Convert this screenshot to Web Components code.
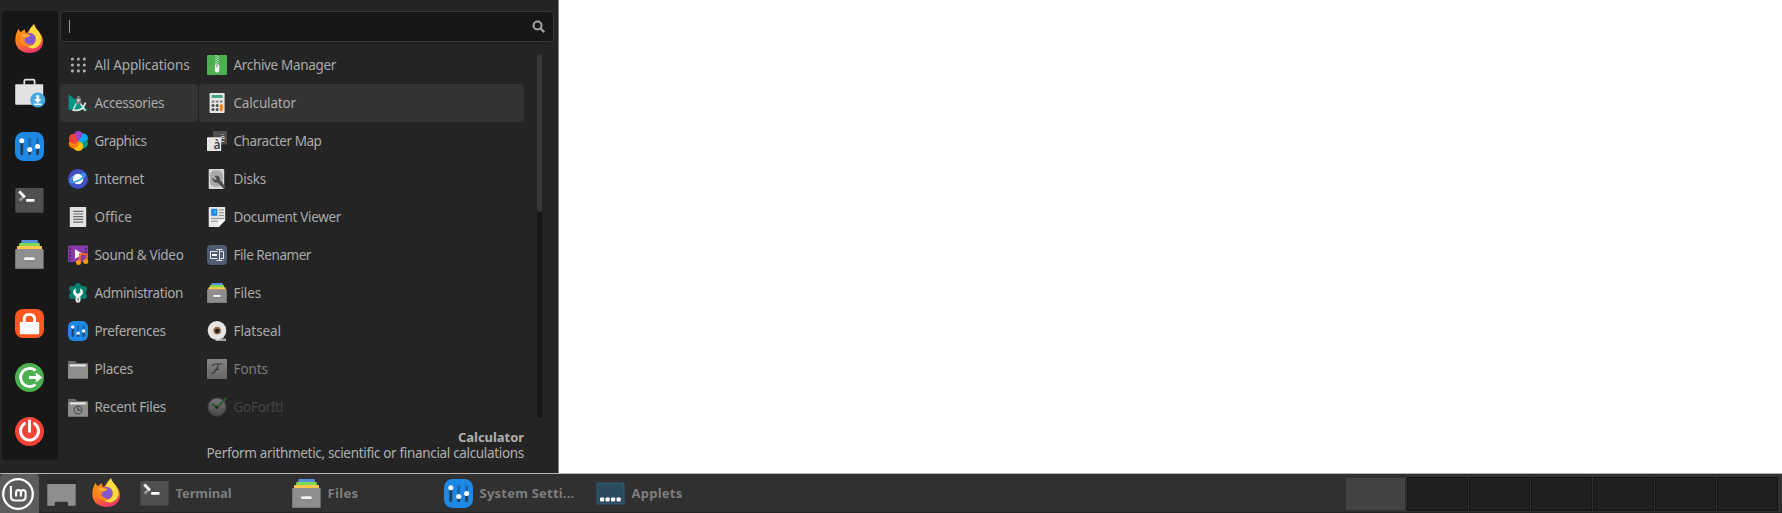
<!DOCTYPE html>
<html lang="en">
<head>
<meta charset="utf-8">
<title>Desktop</title>
<style>
html,body{margin:0;padding:0;background:#fff;overflow:hidden}
body{font-family:"Noto Sans","Open Sans",sans-serif;color:#aaa}
</style>
</head>
<body>
<desk-top></desk-top>
<script>
const settings = `<rect width="29" height="29" rx="8.5" fill="#1e88e5"/>
<path d="M6.8 8.5V21.8M14.7 18V21.8M22.6 15V21.8" stroke="#263f5a" stroke-width="2.9" stroke-linecap="round"/>
<path d="M14.7 7.5V15M22.6 7.5V12" stroke="#1766b0" stroke-width="2.9" stroke-linecap="round"/>
<circle cx="6.8" cy="8.7" r="2.5" fill="#fff"/><circle cx="14.7" cy="17.6" r="2.5" fill="#fff"/><circle cx="22.6" cy="14.6" r="2.5" fill="#fff"/>`;
const files = `<rect x="6.3" y="0" width="16.6" height="6" rx=".8" fill="#5290d9"/><rect x="4.2" y="3" width="20.6" height="6" rx=".8" fill="#7ed957"/><rect x="2" y="6" width="25" height="6" rx=".8" fill="#ffc84a"/><rect x=".2" y="9" width="28.4" height="20" rx="1" fill="#8e8e8e"/><path d="M.4 28.4H28.4" stroke="#757575" stroke-width="1"/><rect x="9.2" y="17.3" width="10.4" height="3" rx=".8" fill="#f4f4f4"/><path d="M9.5 20.9H19.3" stroke="#727272" stroke-width=".8"/>`;
const folder = `<path d="M0 3Q0 2 1 2H7L9 4H20V9H0Z" fill="#6c6c6c"/><rect x="0" y="5.2" width="20" height="14.5" rx=".6" fill="#8e8e8e"/><rect x="2" y="5.4" width="16" height="2" fill="#ececec"/>`;
const ICONS = {
firefox:[29,`<defs><linearGradient id="a" x1=".3" y1="0" x2=".6" y2="1"><stop offset="0" stop-color="#ff9800"/><stop offset=".55" stop-color="#ff7a20"/><stop offset="1" stop-color="#e8336e"/></linearGradient></defs>
<path d="M3.8 4.8Q4 7.3 6 8Q8 6 10 5.2Q9.7 8 11.5 9.5L18 1.2Q18.4 .2 19 .2Q20 4 24 8Q28.5 13 28 18Q26.500 29 14.300 29Q2 28.500 .3 17.300Q.2 9 3.800 4.800Z" fill="url(#a)"/>
<path d="M19 .2Q13.500 5 14.200 10Q22 12 20.500 17.500Q18.500 22 12 22.600Q19 27 24.800 20.500Q27.500 16 25.300 10.500Q24 7.500 21.600 5Q19.500 2.500 19 .2Z" fill="#ffdc3d"/>
<circle cx="14.400" cy="15" r="6.200" fill="#8458cf"/>
<path d="M3.800 9.500Q8 8 12.200 9.400L15.600 11Q14.500 13.500 11 13.400Q9 15 9.600 17.300Q11 20.500 15.800 20.400Q13 23.200 9 21.800Q3.500 18.800 3.800 9.500Z" fill="#ff8a1d"/><path d="M6 11Q10 9.500 14.800 11.300Q13 13.100 9.600 12.900Z" fill="#ffb343"/>`],
bag:[29,`<g transform="translate(0 .7)"><path d="M9.300 6V2.300Q9.300 1 10.600 1H18.300Q19.600 1 19.600 2.300V6" fill="none" stroke="#e2e2e2" stroke-width="1.700"/><rect x=".2" y="5.500" width="28" height="20.600" rx=".8" fill="#e2e2e2"/><circle cx="22.800" cy="21.300" r="7.600" fill="#43a9e0"/><path d="M21.300 16.600H24.200V20.500H26.700L22.750 24.200L18.800 20.500H21.300ZM18.900 24.700H26.600V26.200H18.900Z" fill="#fff"/></g>`],
settings:[29,settings], pref:[29,settings], files:[29,files],
terminal:[29,`<rect x=".3" y="2" width="28.300" height="25" rx="1.300" fill="#505050"/><path d="M.8 26.400H28" stroke="#3d3d3d"/><path d="M8.800 10.300L4.600 14.600" stroke="#9a9a9a" stroke-width="2.600"/><path d="M4.200 5.500L10 11.300" stroke="#fff" stroke-width="2.700"/><rect x="11.200" y="13" width="8.300" height="2.800" rx=".5" fill="#fff"/>`],
lock:[29,`<rect width="29" height="29" rx="8" fill="#ff5722"/><path d="M9.200 15V10.300Q9.200 5.400 14.400 5.400Q19.600 5.400 19.600 10.300V15" fill="none" stroke="#fff" stroke-width="2.900"/><rect x="4.800" y="13" width="19.400" height="12.200" rx="1.200" fill="#fff"/>`],
logout:[29,`<circle cx="14.500" cy="14.500" r="14.500" fill="#4caf50"/><path d="M20.500 7.500A9.100 9.100 0 1 0 20.500 21.500" fill="none" stroke="#fff" stroke-width="2.900"/><path d="M14 13.100H20.800V9.500L27.500 14.500L20.800 19.500V15.900H14Z" fill="#fff"/>`],
power:[29,`<circle cx="14.500" cy="14.500" r="14.500" fill="#f44336"/><path d="M9.500 6.600A9 9 0 1 0 19.500 6.600" fill="none" stroke="#fff" stroke-width="2.900" stroke-linecap="round"/><path d="M14.500 4V14.500" stroke="#fff" stroke-width="2.900" stroke-linecap="round"/>`],
all:[20,`<g fill="#aeaeae">${[4.6,10.600,16.500].map(y=>[4.600,10.600,16.500].map(x=>`<circle cx="${x-.2}" cy="${y-.6}" r="1.550"/>`).join('')).join('')}</g>`],
accessories:[20,`<path d="M.6 1.300L20 17H.6Z" fill="#009688"/><path d="M9.200 3h2.400v2.200h1.600v4.500l-1.500 1.600H9L7.600 9.700V5.200h1.600z" fill="#7d7d7d"/><circle cx="10.400" cy="7.400" r="1.300" fill="#ddd"/><path d="M8.200 10.500L4.800 17.800M12.500 10.500L17.500 18" stroke="#ddd" stroke-width="1.500"/><path d="M4.700 16.800Q14.500 19.500 17.500 9.600" fill="none" stroke="#e5e5e5" stroke-width="1.800"/>`],
graphics:[20,`<circle cx="10.300" cy="4.900" r="4.900" fill="#9c3fc4"/><circle cx="15" cy="7.500" r="4.900" fill="#039be5"/><circle cx="15" cy="12.600" r="4.900" fill="#009a85"/><circle cx="10.300" cy="15.200" r="4.900" fill="#ffc107"/><circle cx="5.700" cy="12.600" r="4.900" fill="#ff8500"/><path d="M10.300 10A4.900 4.900 0 1 1 8.600 3.800Q9 7.500 10.300 10Z" fill="#f4433c"/><path d="M10.300 10L13.800 3.200Q18.500 1.700 19.600 6.500L15 12Z" fill="#03a9f4"/><path d="M10.300 10L5.700 9V5L10 1L14.500 4Z" fill="#a440c8"/><path d="M10.300 10L6 12L2 9.500Q.5 6 3 3.500Q8 2 8 6Z" fill="#f4433c"/>`],
internet:[20,`<circle cx="10" cy="10" r="10" fill="#3f51c5"/><circle cx="10" cy="10" r="5.300" fill="#fff"/><path d="M5 7.500Q-1 14.500 5.500 13.200Q13 11.400 16.500 6.700Q18 3.500 12.500 5.700" fill="none" stroke="#38a3ed" stroke-width="1.700"/>`],
office:[20,`<rect x="1.800" width="16.400" height="20" rx=".6" fill="#e2e2e2"/><path d="M5.200 4.400H15.200M5.200 7H15.200M5.200 9.700H15.200M5.200 12.400H15.200M5.200 15.100H15.200" stroke="#686868" stroke-width="1.200"/>`],
media:[20,`<rect y=".5" width="20" height="16.500" rx=".5" fill="#853ca4"/><path d="M2.100 3V15.500M17.900 3V10" stroke="#4f226f" stroke-width="1.800" stroke-dasharray="2 1.500"/><path d="M7 4.200L15.200 9L7 13.800Z" fill="#fff"/><path d="M11.800 17V9.200H19V16" fill="none" stroke="#ff6417" stroke-width="1.800"/><circle cx="10.500" cy="17.400" r="2.500" fill="#ff9800"/><circle cx="17.700" cy="16.400" r="2.500" fill="#ff9800"/>`],
admin:[20,`<g fill="#07806f"><circle cx="10" cy="9.400" r="7.600"/><circle cx="10" cy="3" r="2.900"/><circle cx="10" cy="15.800" r="2.900"/><circle cx="4" cy="6" r="2.900"/><circle cx="16" cy="6" r="2.900"/><circle cx="4" cy="13" r="2.900"/><circle cx="16" cy="13" r="2.900"/></g><path d="M7.700 5.200V9.200L10 11L12.300 9.200V5.200Q15 6.600 15 9.500Q14.600 12 12.300 13V14H7.700V13Q5.400 12 5 9.500Q5 6.600 7.700 5.200Z" fill="#fff"/><path d="M7.600 13.500H12.400V18Q12.400 19.800 10 19.800Q7.600 19.800 7.600 18Z" fill="#ddd"/><path d="M10 15V17.500" stroke="#888" stroke-width="1.200"/>`],
places:[20,folder],
recent:[20,folder+`<circle cx="10" cy="13" r="3.900" fill="none" stroke="#4f4f4f" stroke-width="1.100"/><path d="M10 10.200V13.100H12.500" fill="none" stroke="#444" stroke-width="1.200"/>`],
archive:[20,`<rect width="20" height="20" rx="1" fill="#4caf50"/><path d="M9 0V9M11 1V9" stroke="#e0eee0" stroke-width="1.300" stroke-dasharray="1 1"/><rect x="7.800" y="9" width="4.500" height="8.400" rx="2" fill="#f5f5f5"/><rect x="9.200" y="9" width="1.600" height="3.500" fill="#aaa"/>`],
calc:[20,`<rect x="2.600" width="15" height="20" rx=".8" fill="#e7e7e7"/><rect x="4.600" y="2" width="11" height="3" fill="#42a87d"/><g fill="#898989"><circle cx="6" cy="8.600" r="1.450"/><circle cx="10.100" cy="8.600" r="1.450"/><circle cx="14.200" cy="8.600" r="1.450"/></g><g fill="#4b4b4b"><circle cx="6" cy="12.600" r="1.500"/><circle cx="10.100" cy="12.600" r="1.500"/><circle cx="6" cy="16.600" r="1.500"/><circle cx="10.100" cy="16.600" r="1.500"/></g><rect x="12.800" y="11.300" width="3" height="6.800" rx=".6" fill="#ff7f0e"/>`],
charmap:[20,`<rect x="6" y="0" width="14" height="13.500" rx=".6" fill="#4d4d4d"/><text x="12.500" y="11" font-family="Noto Sans" font-size="10" fill="#ccc">ë</text><rect y="6.200" width="14.200" height="13.800" rx=".5" fill="#e5e5e5"/><text x="6.400" y="18" font-family="Noto Sans" font-size="12" font-weight="600" fill="#444">à</text>`],
disks:[20,`<rect x="1.700" width="15.500" height="20" rx=".8" fill="#d8d8d8"/><rect x="3" y="1.200" width="13" height="16.500" rx="5" fill="#aaa"/><path d="M8.200 7.200Q12.600 6.400 12.500 10.500L18.500 18.500L17 19.600L10.500 13.200Q6.400 14 5.500 9.300L8.200 11.500L10 10Z" fill="#4d4d4d" stroke="#4d4d4d" stroke-width=".8"/>`],
doc:[20,`<path d="M1.700 .7Q1.700 0 2.400 0H17.500Q18.200 0 18.200 .7V13.300L11.700 20H2.400Q1.700 20 1.700 19.300Z" fill="#e7e7e7"/><path d="M11.700 20V13.300H18.200Z" fill="#fff"/><rect x="4.200" y="1.800" width="6" height="7" fill="#1f7fe8"/><path d="M6.600 3H9V6.500H6.600Z" fill="#29b6f6"/><path d="M11.700 3H17M11.700 5.700H17M11.700 8.400H17M4 11.400H17M4 14.200H11" stroke="#8a8a8a" stroke-width="1"/>`],
rename:[20,`<rect width="20" height="20" rx="4" fill="#4d5c70"/><path d="M10.500 6.500H3.500V13.500H10.500M13.500 6.500H16.500V13.500H13.500M12.500 4.500V15.500M9.500 4.500H15.500M9.500 15.500H15.500" fill="none" stroke="#e6e8eb" stroke-width="1"/><rect x="5" y="9" width="5" height="2" fill="#fff"/>`],
flatseal:[20,`<path d="M10 17.500H19V20H8Z" fill="#a4a4a4"/><ellipse cx="10" cy="9.500" rx="9.300" ry="9.500" fill="#e6e5e3"/><circle cx="10.200" cy="9.600" r="3.900" fill="#a5764e"/><circle cx="10.300" cy="9.800" r="2.400" fill="#222"/>`],
fonts:[20,`<defs><linearGradient id="b" x1="0" y1="0" x2="0" y2="1"><stop offset="0" stop-color="#868686"/><stop offset="1" stop-color="#656565"/></linearGradient></defs><rect width="20" height="20" rx=".6" fill="url(#b)"/><path d="M5.500 7.500Q5 5 8 5H15.500M11.500 5Q9.500 13 4.500 15M7.500 10.400H12.500" fill="none" stroke="#3c3c3c" stroke-width="1.200"/>`],
goforit:[20,`<defs><linearGradient id="c" x1="0" y1="0" x2="0" y2="1"><stop offset="0" stop-color="#767676"/><stop offset="1" stop-color="#474747"/></linearGradient></defs><circle cx="10" cy="10" r="9" fill="url(#c)" stroke="#3f3f3f" stroke-width="1.300"/><path d="M4.500 6.800L10 10.600L19.200 1" fill="none" stroke="#24612a" stroke-width="2"/><circle cx="9.800" cy="10.200" r="1.600" fill="#292929"/>`],
mint:[32,`<circle cx="16" cy="16" r="14.800" fill="none" stroke="#fff" stroke-width="2.300"/><path d="M8.900 8V18.500Q8.900 22.500 13 22.500H19.500Q23.600 22.500 23.600 18.700V14.700Q23.600 12.200 21.200 12.200Q18.900 12.200 18.900 14.700V18.500M18.900 14.700Q18.900 12.200 16.500 12.200Q14.100 12.200 14.100 14.700V18.500" fill="none" stroke="#f5f5f5" stroke-width="2.200"/>`],
desktop:[29,`<rect x=".3" y="1.700" width="28.400" height="4" fill="#262626"/><path d="M.3 6H28.700V27.800H21V25.200Q21 23.800 19.600 23.800H9.200Q7.800 23.800 7.800 25.200V27.800H.3Z" fill="#8e8e8e"/>`],
applets:[29,`<rect x=".5" y="3.500" width="28" height="22" rx="1" fill="#2d5d78"/><rect x="1.700" y="4.700" width="25.600" height="19.600" fill="#294b5d"/><g fill="#fff"><rect x="4" y="18.400" width="4.200" height="4.200" rx="1"/><rect x="9.500" y="18.400" width="4.200" height="4.200" rx="1"/><rect x="15" y="18.400" width="4.200" height="4.200" rx="1"/><rect x="20.500" y="18.400" width="4.200" height="4.200" rx="1"/></g>`],
search:[14,`<circle cx="5.500" cy="5.500" r="4" fill="none" stroke="#a6a6a6" stroke-width="2"/><path d="M8.300 8.300L12.300 12.200" stroke="#a6a6a6" stroke-width="2.200"/>`]
};
function define(name, html, ready){
  customElements.define(name, class extends HTMLElement{
    connectedCallback(){
      if(this.shadowRoot) return;
      const r=this.attachShadow({mode:'open'});
      r.innerHTML=typeof html==='function'?html(this):html;
      if(ready) ready(this,r);
    }
  });
}
define('app-icon', el=>{
  const [v,body]=ICONS[el.getAttribute('name')], s=el.getAttribute('size')||v;
  return `<style>:host{display:block;flex:none;width:${s}px;height:${s}px}svg{display:block;overflow:visible}</style><svg width="${s}" height="${s}" viewBox="0 0 ${v} ${v}">${body}</svg>`;
});
/* a label whose tracking is tuned so that it fills the given advance width */
define('fit-label', `<style>:host{display:block;white-space:pre;flex:none}span{display:inline-block}</style><span><slot></slot></span>`,
 (el,r)=>{
  const s=r.querySelector('span'), n=el.textContent.length;
  s.style.letterSpacing=((+el.getAttribute('w')-s.getBoundingClientRect().width)/n)+'px';
});
define('menu-row', el=>`<style>
:host{display:flex;align-items:center;box-sizing:border-box;height:38px;padding-left:8px;gap:6.500px;border-radius:4px;font-size:13.500px;line-height:20px;color:#aaa}
:host([active]){background:#333}
</style><app-icon name="${el.getAttribute('icon')}" size="20"></app-icon><fit-label w="${el.getAttribute('w')}">${el.getAttribute('label').replace('&','&amp;')}</fit-label>`);
define('search-box', `<style>
:host{display:flex;align-items:center;justify-content:space-between;box-sizing:border-box;width:494px;height:31px;padding:0 7px 0 8px;border:1px solid #373737;border-radius:4px;background:#171717}
i{width:1px;height:13px;background:#999;margin-top:-1px}
</style><i></i><app-icon name="search"></app-icon>`);
define('side-bar', `<style>
:host{display:flex;flex-direction:column;align-items:flex-start;gap:25px;box-sizing:border-box;width:56px;height:448.500px;margin:11px 0 0 2px;padding:13px 0 0 13.400px;border-radius:4px;background:#171717}
.gap{margin-top:15px}
</style><app-icon name="firefox"></app-icon><app-icon name="bag"></app-icon><app-icon name="settings"></app-icon><app-icon name="terminal"></app-icon><app-icon name="files"></app-icon><app-icon class="gap" name="lock"></app-icon><app-icon name="logout"></app-icon><app-icon name="power"></app-icon>`);
define('scroll-bar', `<style>:host{display:block;width:5px;height:364px;border-radius:3px;background:#171717}div{height:158px;border-radius:3px;background:#373737}</style><div></div>`);
const rows=(list,act)=>list.map(([i,l,w,c])=>`<menu-row icon="${i}" label="${l}" w="${w}" ${l===act?'active':''} ${c?`style="color:${c}"`:''}></menu-row>`).join('');
define('app-menu', `<style>
:host{display:flex;box-sizing:border-box;width:559px;height:473px;background:#242424;border-right:1px solid #8b7d7b}
.main{margin:11px 0 0 2px;width:494px}
.lists{display:grid;grid-template-columns:138px 325px 5px;column-gap:1px;margin-top:4px}
scroll-bar{margin:8px 0 0 12px}
.info{width:464px;margin-top:3px;display:flex;flex-direction:column;align-items:flex-end;font-size:13.500px;line-height:16px;color:#b0b0b0}
.info b{font-weight:700;font-size:13px}
</style><side-bar></side-bar><div class="main"><search-box></search-box><div class="lists"><div>${rows([
['all','All Applications',95],['accessories','Accessories',69.500],['graphics','Graphics',52],['internet','Internet',49.500],['office','Office',37.500],['media','Sound & Video',89],['admin','Administration',88.500],['pref','Preferences',71],['places','Places',38.500],['recent','Recent Files',71.500]],'Accessories')}</div><div>${rows([
['archive','Archive Manager',102.500],['calc','Calculator',62.500],['charmap','Character Map',88],['disks','Disks',32.500],['doc','Document Viewer',107.500],['rename','File Renamer',77.500],['files','Files',27.500],['flatseal','Flatseal',47.500],['fonts','Fonts',34.500,'#7c7c7c'],['goforit','GoForIt!',49.500,'#434343']],'Calculator')}</div><scroll-bar></scroll-bar></div>
<div class="info"><b><fit-label w="66">Calculator</fit-label></b><fit-label w="317.500">Perform arithmetic, scientific or financial calculations</fit-label></div></div>`);
define('task-button', el=>`<style>:host{display:flex;align-items:center;gap:7px;width:152px;height:38px;flex:none;font-size:13px;font-weight:700;color:#7e7e7e}</style><app-icon name="${el.getAttribute('icon')}"></app-icon><fit-label w="${el.getAttribute('w')}">${el.getAttribute('label')}</fit-label>`);
define('work-spaces', `<style>:host{display:flex;gap:1px;margin-left:auto;padding:3px 4px 0 0}div{box-sizing:border-box;width:61px;height:34px;border:1px solid #141414;background:#1f1f1f}.on{background:#434343;border-color:#303030}</style><div class="on"></div>${'<div></div>'.repeat(6)}`);
define('task-bar', `<style>
:host{display:flex;align-items:flex-start;box-sizing:border-box;height:40px;background:#303030;border-top:1px solid #bcb0b2;border-bottom:1px solid #252525}
.start{box-sizing:border-box;width:39px;height:39px;padding:4px 0 0 2.400px;border-radius:4px 4px 0 0;background:#5c5c5c}
.launch{display:flex;gap:16.400px;padding:4px 0 0 8px;width:92px;box-sizing:border-box}
</style><div class="start"><app-icon name="mint"></app-icon></div><div class="launch"><app-icon name="desktop"></app-icon><app-icon name="firefox"></app-icon></div>
<task-button icon="terminal" label="Terminal" w="56" style="margin-left:8.500px"></task-button><task-button icon="files" label="Files" w="31"></task-button><task-button icon="settings" label="System Setti..." w="95"></task-button><task-button icon="applets" label="Applets" w="51"></task-button><work-spaces></work-spaces>`);
define('desk-top', `<style>:host{display:flex;flex-direction:column;width:1782px;height:513px;background:#fff}</style><app-menu></app-menu><task-bar></task-bar>`);
</script>
</body>
</html>
